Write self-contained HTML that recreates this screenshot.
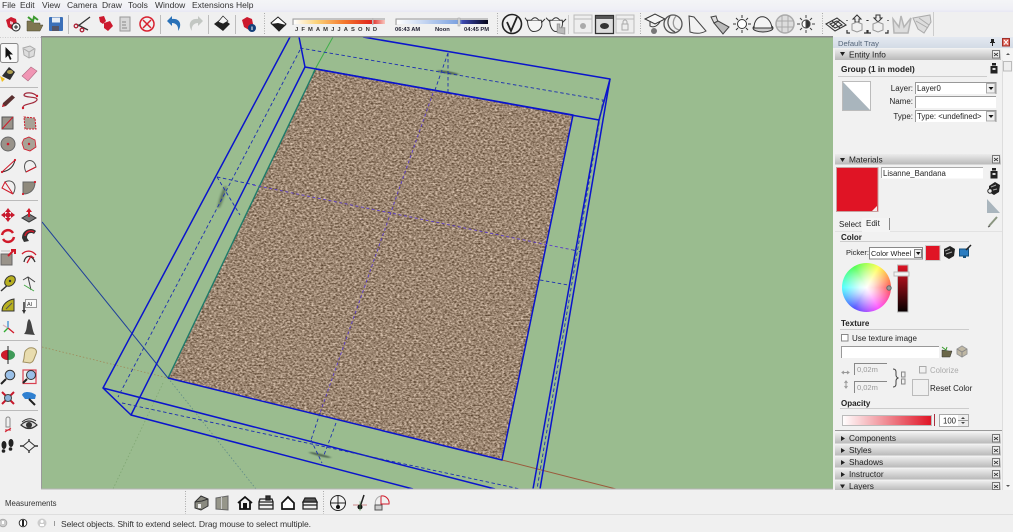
<!DOCTYPE html>
<html><head><meta charset="utf-8"><title>SketchUp</title>
<style>
html,body{margin:0;padding:0;background:#f0f0f0;width:1013px;height:532px;overflow:hidden}
svg{display:block;position:absolute;left:0;top:0;filter:blur(.3px)}
text{font-family:"Liberation Sans",sans-serif;font-size:8px;fill:#222}
.b{font-weight:bold}
.h{font-size:8.5px;fill:#333}
.g{fill:#999}
</style></head><body>
<svg width="1013" height="532" viewBox="0 0 1013 532" xmlns="http://www.w3.org/2000/svg">
<defs>
<filter id="carpet" x="0" y="0" width="100%" height="100%" color-interpolation-filters="sRGB">
<feTurbulence type="fractalNoise" baseFrequency="0.42 0.6" numOctaves="2" seed="7"/>
<feColorMatrix type="matrix" values="0.85 0 0 0 0.185  0.85 0 0 0 0.1  0.85 0 0 0 0.02  0 0 0 0 1"/>
<feGaussianBlur stdDeviation=".35"/>
</filter>
<filter id="sm"><feGaussianBlur stdDeviation="1.2 .5"/></filter>
<clipPath id="cq"><polygon points="316,69 573,115 502,460 168,378"/></clipPath>
<clipPath id="view"><rect x="42" y="37" width="791" height="452"/></clipPath>
<linearGradient id="hd" x1="0" y1="0" x2="0" y2="1"><stop offset="0" stop-color="#ececec"/><stop offset="1" stop-color="#b9b9b9"/></linearGradient>
<linearGradient id="tray" x1="0" y1="0" x2="0" y2="1"><stop offset="0" stop-color="#e4e9f1"/><stop offset="1" stop-color="#d3dbe6"/></linearGradient>
<linearGradient id="menu" x1="0" y1="0" x2="0" y2="1"><stop offset="0" stop-color="#f4f5f7"/><stop offset=".75" stop-color="#f0f0f6"/><stop offset="1" stop-color="#e7e7f4"/></linearGradient>
<linearGradient id="mon" x1="0" y1="0" x2="1" y2="0"><stop offset="0" stop-color="#fff"/><stop offset=".25" stop-color="#fbd37a"/><stop offset=".55" stop-color="#f4782c"/><stop offset=".85" stop-color="#e0241c"/><stop offset="1" stop-color="#f8c8c0"/></linearGradient>
<linearGradient id="tim" x1="0" y1="0" x2="1" y2="0"><stop offset="0" stop-color="#fff"/><stop offset=".68" stop-color="#7aa0e0"/><stop offset=".72" stop-color="#3c48b0"/><stop offset="1" stop-color="#05051a"/></linearGradient>
<linearGradient id="op" x1="0" y1="0" x2="1" y2="0"><stop offset="0" stop-color="#fff"/><stop offset="1" stop-color="#e01425"/></linearGradient>
<linearGradient id="rb" x1="0" y1="0" x2="0" y2="1"><stop offset="0" stop-color="#e01425"/><stop offset="1" stop-color="#050000"/></linearGradient>
</defs>

<!-- chrome -->
<rect width="1013" height="532" fill="#f0f0f0"/>
<rect width="1013" height="12" fill="url(#menu)"/>
<text x="2" y="8" class="h">File</text><text x="20" y="8" class="h">Edit</text><text x="42" y="8" class="h">View</text><text x="67" y="8" class="h">Camera</text><text x="102" y="8" class="h">Draw</text><text x="128" y="8" class="h">Tools</text><text x="155" y="8" class="h">Window</text><text x="192" y="8" class="h">Extensions</text><text x="236" y="8" class="h">Help</text>

<!-- viewport -->
<rect x="42" y="37" width="791" height="452" fill="#9abc8f"/>
<g clip-path="url(#view)">
<g clip-path="url(#cq)"><rect x="160" y="60" width="420" height="410" filter="url(#carpet)"/></g>
<!-- axes -->
<path d="M333,37 L313,73" stroke="#3fae4a" stroke-width="1" fill="none"/>
<path d="M315,70 L168,378" stroke="#1e7a6a" stroke-width="1.4" fill="none"/>
<path d="M502,460 L616,489" stroke="#9a5a3c" stroke-width="1" fill="none"/>
<path d="M42,347 L168,378" stroke="#a08a5a" stroke-width=".8" stroke-dasharray="1.500 2" fill="none"/>
<path d="M163,383 L113,489" stroke="#7fa672" stroke-width=".8" stroke-dasharray="1.500 2" fill="none"/>
<path d="M168,378 L256,489" stroke="#5f8a88" stroke-width=".8" stroke-dasharray="1.500 2" fill="none"/>
<path d="M42,222 L168,378" stroke="#1f3f9a" stroke-width="1" fill="none"/>
<!-- smudges -->
<g filter="url(#sm)" fill="#45584a" opacity=".85"><ellipse cx="448" cy="72.500" rx="11" ry="1.300" transform="rotate(10 448 72.500)"/><ellipse cx="222" cy="197" rx="1.500" ry="12" transform="rotate(18 222 197)"/><ellipse cx="320" cy="455" rx="11" ry="1.200" transform="rotate(14 320 455)"/></g>
<!-- solid lines -->
<g stroke="#0a14cc" stroke-width="1.500" fill="none" stroke-linejoin="round">
<path d="M363,37 L610,79 L599,120 L305,67 L299,37"/>
<path d="M290,37 L103,388 L131,415 L305,67"/>
<path d="M103,388 L495,489"/><path d="M131,415 L413,489"/>
<path d="M610,79 L540,489"/><path d="M599,120 L533,489"/>
<path d="M316,69 L573,115 L502,460 L168,378"/>
</g>
<!-- dashed lines -->
<g stroke="#1c2fb0" stroke-width=".9" stroke-dasharray="3.500 2.500" fill="none">
<path d="M300,48 L603,100 L537,489"/><path d="M300,50 L118,397"/>
<path d="M122,403 L520,489"/>
<path d="M448,53 L435,90"/><path d="M448,53 L448,92"/>
<path d="M336,423 L324,455"/><path d="M311,440 L322,463"/><path d="M320,413 L311,440"/>
<path d="M217,177 L240,215"/><path d="M217,177 L255,185"/>
<path d="M540,280 L568,285"/><path d="M573,250 L580,251.500"/>
</g>
<g stroke="#5a3cc8" stroke-width=".9" stroke-dasharray="3 2.500" fill="none">
<path d="M433,93 L320,413"/><path d="M253,185 L573,250"/>
</g>
</g>
<rect x="41" y="37" width="1" height="452" fill="#9a9a9a"/>
<rect x="41" y="36" width="792" height="1.500" fill="#8a8a8a"/>
<rect x="41" y="488.500" width="792" height="1" fill="#b5b5b5"/>

<!-- TOP TOOLBAR -->
<g stroke="#bdbdbd" fill="none"><path d="M68.500,15V34M160.500,15V34M208.500,15V34M235.500,15V34"/></g>
<g stroke="#aaa" stroke-dasharray="1 1.500" fill="none"><path d="M264.500,13V35M497.500,13V35M640.500,13V35M822.500,13V35"/></g>
<path d="M568.500,15V34M933.500,12V36" stroke="#ccc" fill="none"/>
<!-- new -->
<g transform="translate(13,24)"><path d="M-7,-4 L-2,-7 L3,-5 L4,0 L0,6 L-5,3Z" fill="#cc1a2e"/><path d="M-3,-3l3,1v3l-3,-1z" fill="#f3c0c8"/><circle cx="3" cy="3" r="4" fill="#eee" stroke="#222"/><path d="M1,3h4M3,1v4" stroke="#222"/></g>
<!-- open -->
<g transform="translate(35,24)"><path d="M-8,7 V-3 H-3 L-1,-1 H5 V1 H8 L5,7Z" fill="#7e7650" stroke="#4a452e" stroke-width=".5"/><path d="M-7,-7 L-2,-3 L-1,-7 L3,-4" stroke="#3c9a2e" stroke-width="2" fill="none"/></g>
<!-- save -->
<g transform="translate(56,24)"><rect x="-7" y="-7" width="14" height="14" fill="#3c70b8" rx="1"/><rect x="-4" y="-6.500" width="8" height="5" fill="#e8eef5"/><rect x="-4" y="2" width="7" height="5" fill="#556"/></g>
<!-- cut -->
<g transform="translate(83,24)" stroke="#333" stroke-width="1.300" fill="none"><path d="M-5,2 L7,-7M-7,0 L5,6" /><circle cx="-7" cy="2" r="1.800" stroke="#b0263a"/><circle cx="-1" cy="6" r="1.800" stroke="#b0263a"/></g>
<!-- copy -->
<g transform="translate(106,24)" fill="#cc1a2e"><path d="M-7,-7 L-2,-8 L0,-3 L-3,0 L-6,-2Z"/><path d="M-2,-1 L4,-3 L7,2 L2,7 L-2,4Z"/></g>
<!-- paste -->
<g transform="translate(125,24)"><rect x="-5" y="-7" width="10" height="14" fill="#d8d8d8" stroke="#999"/><path d="M-3,-2h4M-3,1h4M-3,4h5" stroke="#888"/></g>
<!-- erase -->
<g transform="translate(147,24)" fill="none" stroke="#d8202e" stroke-width="1.500"><circle r="7"/><path d="M-4,-4L4,4M4,-4L-4,4"/></g>
<!-- undo redo -->
<g transform="translate(174,24)"><path d="M-7,-3 L-2,-8 V-5 C5,-6 9,0 4,7 C5,1 1,-1 -2,-1 V2Z" fill="#2a72b8"/></g>
<g transform="translate(196,24) scale(-1,1)"><path d="M-7,-3 L-2,-8 V-5 C5,-6 9,0 4,7 C5,1 1,-1 -2,-1 V2Z" fill="#c3c7c3"/></g>
<!-- print -->
<g transform="translate(222,24)"><path d="M-8,0 L0,-6 L8,0 L1,7 Z" fill="#222"/><path d="M-4,-2 L1,-8 L6,-3 L1,0Z" fill="#f5f5f5" stroke="#222" stroke-width=".7"/></g>
<!-- model info -->
<g transform="translate(249,24)"><path d="M-7,-4 L-2,-7 L3,-5 L4,0 L0,6 L-5,3Z" fill="#cc1a2e"/><circle cx="3" cy="4" r="4" fill="#14407a"/><rect x="2.500" y="2.500" width="1" height="3.500" fill="#fff"/></g>
<!-- shadow -->
<g transform="translate(279,24)"><path d="M-8,-1 L-1,-7 L7,0 L0,7Z" fill="#fff" stroke="#222"/><path d="M-8,0 L-1,-1 L7,1 L0,7Z" fill="#222"/></g>
<!-- month -->
<path d="M293,25V19H385" stroke="#999" fill="none"/><rect x="294" y="20" width="91" height="4" fill="url(#mon)"/><rect x="372" y="18" width="1.500" height="7" fill="#bbb"/>
<text x="295" y="31" style="font-size:5.800px;font-weight:bold;letter-spacing:3.100px;fill:#333">JFMAMJJASOND</text>
<!-- time -->
<path d="M396,25V19H488" stroke="#999" fill="none"/><rect x="397" y="20" width="91" height="4" fill="url(#tim)"/><rect x="458" y="18" width="2" height="8" fill="#ddd" stroke="#999" stroke-width=".5"/>
<text x="395" y="31" style="font-size:5.800px;font-weight:bold;fill:#223">06:43 AM</text><text x="435" y="31" style="font-size:5.800px;font-weight:bold;fill:#223">Noon</text><text x="464" y="31" style="font-size:5.800px;font-weight:bold;fill:#223">04:45 PM</text>
<!-- V logo -->
<g transform="translate(512,24)" fill="none" stroke="#222"><circle r="9.500" stroke-width="1.600"/><path d="M-5,-2 L-1,7 L5,-7" stroke-width="1.800"/></g>
<!-- teapots -->
<g transform="translate(535,24) scale(1.25)" fill="#f5f5f5" stroke="#333" stroke-width=".8"><path d="M-6,-3 H5 C7,3 3,6 -1,6 C-4,6 -6,2 -6,-3Z"/><path d="M-6,-2 L-8,-5 M5,-1 L8,-4" fill="none"/><path d="M-3,-3 Q0,-7 3,-3"/></g>
<g transform="translate(556,24) scale(1.25)" fill="#f5f5f5" stroke="#333" stroke-width=".8"><path d="M-5,-3 H5 C6,3 3,6 0,6 C-3,6 -5,2 -5,-3Z"/><path d="M-5,-2 L-8,-5 M5,-1 L8,-4" fill="none"/><path d="M-3,-3 Q0,-7 3,-3"/><path d="M1,7 V0 l2,0 V3 l4,0 V8 Z" fill="#bbb" stroke="#999"/></g>
<!-- windows -->
<g fill="#eee" stroke="#bbb"><rect x="574" y="15" width="18" height="18"/><rect x="616" y="15" width="18" height="18"/></g>
<path d="M574,19h18M616,19h18" stroke="#bbb"/><circle cx="583" cy="26" r="3" fill="#aaa"/><rect x="622" y="24" width="6" height="6" fill="none" stroke="#aaa"/><path d="M623,24v-2a2,2 0 0 1 4,0v2" fill="none" stroke="#aaa"/>
<rect x="595.500" y="15.500" width="18" height="18" fill="#ddd" stroke="#333" stroke-width="1.300"/><rect x="596" y="16" width="17" height="3" fill="#555"/><path d="M600,26 a4.500,3 0 0 1 9,0 a4.500,3 0 0 1 -9,0" fill="#333"/>
<!-- cap -->
<g transform="translate(655,22)"><path d="M-10,-3 L0,-8 L10,-3 L0,2Z" fill="#f5f5f5" stroke="#333"/><path d="M-5,0 V4 Q0,7 5,0" fill="none" stroke="#333"/><circle cy="9" cx="-1" r="3" fill="#777"/></g>
<!-- partial sphere -->
<g transform="translate(673,24)" fill="none" stroke="#555" stroke-width="1.300"><circle r="9"/><path d="M-3,-8 C-7,-2 -5,5 2,8"/><path d="M3,-8 C-1,-3 -1,4 6,6" stroke="#999"/></g>
<!-- cone -->
<g transform="translate(697,25)" fill="#f2f2f2" stroke="#444"><path d="M-8,-9 L-3,-8 L9,6 Q2,10 -7,7Z"/></g>
<!-- flashlight -->
<g transform="translate(720,25)" stroke="#444" fill="#eee"><path d="M-9,-8 L-4,-9 L-2,-3 L-6,-2Z" fill="#ddd"/><path d="M-6,-2 L-2,-4 L9,2 L3,9Z" fill="#bbb"/></g>
<!-- sun -->
<g transform="translate(742,24)" stroke="#333" fill="#fff"><circle r="4.500"/><path d="M0,-9V-6M0,9V6M-9,0H-6M9,0H6M-6,-6L-4,-4M6,6L4,4M6,-6L4,-4M-6,6L-4,4"/></g>
<!-- dome -->
<g transform="translate(763,24)" stroke="#333" fill="#f4f4f4"><ellipse cy="4" rx="10" ry="4" fill="#ccc"/><path d="M-9,4 C-9,-11 7,-11 9,4 Z"/></g>
<!-- grid sphere -->
<g transform="translate(785,24)" stroke="#aaa" fill="#ddd"><circle r="9" stroke-width="1.500"/><path d="M-8,-3H8M-8,3H8M-3,-8V8M3,-8V8" fill="none"/></g>
<!-- sun2 -->
<g transform="translate(806,24)" stroke="#444" fill="#fff"><circle r="4"/><path d="M0,-4a4,4 0 0 1 0,8z" fill="#333"/><path d="M0,-9V-6M0,9V6M-9,0H-6M9,0H6M-6,-6L-4,-4M6,6L4,4M6,-6L4,-4M-6,6L-4,4"/></g>
<!-- diamond -->
<g transform="translate(836,24)" stroke="#333" fill="none" stroke-width="1.100"><path d="M-10,0 L1,-6 L10,1 L-1,7Z"/><path d="M-6,0 L1,-3 L6,1 L-1,4Z"/><path d="M-4,-3L4,4M4,-4L-4,3"/></g>
<!-- box up -->
<g transform="translate(857,24)"><path d="M-2,-2V-5H-4L0,-9L4,-5H2V-2Z" fill="#eee" stroke="#333"/><path d="M-5,0 L0,-2 L5,0 V6 L0,8 L-5,6Z" fill="#f0f0f0" stroke="#999"/><path d="M-10,-3V-4M10,-3V-4M-10,6V9H-7M10,6V9H7" stroke="#333" stroke-width="1.200" fill="none"/></g>
<g transform="translate(878,24)"><path d="M-2,-2V-5H-4L0,-9L4,-5H2V-2Z" fill="#eee" stroke="#333" transform="rotate(180 0 -5.500)"/><path d="M-5,0 L0,-2 L5,0 V6 L0,8 L-5,6Z" fill="#f0f0f0" stroke="#999"/><path d="M-10,-3V-4M10,-3V-4M-10,6V9H-7M10,6V9H7" stroke="#333" stroke-width="1.200" fill="none"/></g>
<!-- grass rock -->
<g transform="translate(902,25)" fill="none" stroke="#b5b5b5" stroke-width="1.500"><path d="M-8,8 L-9,-6 L-3,2 L-1,-9 L2,2 L9,-7 L6,8Z" fill="#ddd"/></g>
<g transform="translate(922,24)" fill="#ddd" stroke="#aaa"><path d="M-9,-6 L8,-9 L9,-2 L2,9 L-4,5Z"/><path d="M-6,-3 L6,4M-3,-6 L7,1" fill="none"/></g>

<!-- LEFT TOOLBAR -->
<rect x=".5" y="43.500" width="17.500" height="19" rx="2" fill="#f8f8f8" stroke="#888"/>
<path d="M38,87.500H0M38,200.500H0M38,340.500H0M38,410.500H0" stroke="#bbb" fill="none"/>
<path d="M0,37.500H41" stroke="#ccc" stroke-dasharray="1 1.500"/>
<!-- row 1 -->
<path d="M5.500,47 V58 L8,55.500 L10,60 L11.500,59 L9.500,54.500 L13,54.500Z" fill="#111"/>
<g transform="translate(29,52)" fill="#ddd" stroke="#aaa"><path d="M-6,-4 L1,-6 L6,-3 L5,4 L0,6 L-5,3Z"/><path d="M-5,-3L0,0L5,-3M0,0V6" fill="none"/></g>
<!-- paint, eraser -->
<g transform="translate(8,74)"><path d="M-6,2 L1,-7 L7,-2 L2,6Z" fill="#2f2f2f"/><path d="M-8,2 L-3,5 L-6,8Z" fill="#f0c020"/><ellipse cx="2" cy="-2" rx="3" ry="2" fill="#b0a050"/></g>
<g transform="translate(29,74)"><path d="M-7,2 L2,-7 L8,-3 L-1,7Z" fill="#f096b4" stroke="#b06a80" stroke-width=".6"/></g>
<!-- pencil, freehand -->
<path d="M2,107 L3,103 L12,95 L15,97.500 L6,106Z" fill="#5a3030"/><path d="M2,107 L3,104 L5,106Z" fill="#d01a2a"/>
<path d="M23,109 C21,103 34,105 37,100 C38,96 24,98 24,95 C25,92 33,92 37,96" fill="none" stroke="#a02a3c" stroke-width="1.200"/><circle cx="23" cy="108" r="1.200" fill="#d01a2a"/><circle cx="37" cy="96" r="1.200" fill="#d01a2a"/>
<!-- rectangles -->
<rect x="2" y="117" width="11" height="12" fill="#99938a" stroke="#555"/><path d="M2,129 L13,117" stroke="#d01a2a"/>
<path d="M24,117 L35,118 L36,129 L25,129Z" fill="#a8a296" stroke="#d01a2a" stroke-dasharray="2 1"/>
<!-- circles -->
<circle cx="8" cy="144" r="7" fill="#99938a" stroke="#666"/><circle cx="8" cy="144" r="1.300" fill="#d01a2a"/>
<path d="M29,137 L35,140 L36,147 L30,151 L24,149 L22,143 L24,139Z" fill="#a8a296" stroke="#d01a2a" stroke-width=".8"/><circle cx="29" cy="144" r="1.200" fill="#d01a2a"/>
<!-- arcs -->
<path d="M2,172 Q13,170 15,160" fill="none" stroke="#333"/><path d="M2,172 L15,160" stroke="#d01a2a" fill="none"/><circle cx="2" cy="172" r="1.100" fill="#d01a2a"/><circle cx="15" cy="160" r="1.100" fill="#d01a2a"/>
<path d="M26,172 C20,160 34,156 36,167Z" fill="none" stroke="#555"/><path d="M26,172 L36,167" stroke="#d01a2a"/>
<path d="M5,182 C13,178 18,186 13,194" fill="none" stroke="#555"/><path d="M2,188 L5,182 L13,194Z" fill="none" stroke="#d01a2a"/>
<path d="M23,182 H35 C35,190 30,194 23,194Z" fill="#8f8a7d" stroke="#666"/><circle cx="23" cy="194" r="1.100" fill="#d01a2a"/><circle cx="35" cy="182" r="1.100" fill="#d01a2a"/>
<!-- move, pushpull -->
<g transform="translate(8,215)" fill="#c8182c"><path d="M0,-7 L3,-3 H-3ZM0,7 L3,3 H-3ZM-7,0 L-3,-3 V3ZM7,0 L3,-3 V3Z"/><rect x="-2.500" y="-2.500" width="5" height="5" transform="rotate(45)"/></g>
<g transform="translate(29,216)"><path d="M-7,2 L0,-2 L7,2 L0,6Z" fill="#777" stroke="#333"/><path d="M0,-8 L3,-4 H1 V1 H-1 V-4 H-3Z" fill="#d01a2a"/></g>
<!-- rotate, followme -->
<g transform="translate(8,236)" fill="none" stroke="#d01a2a" stroke-width="2.500"><path d="M-6,-1 A6,6 0 0 1 5,-3"/><path d="M6,1 A6,6 0 0 1 -5,3"/></g>
<g transform="translate(29,235)"><path d="M-7,3 C-7,-6 3,-8 7,-4 L5,-1 C2,-3 -2,-2 -2,3 L0,6 L-5,7Z" fill="#333"/><path d="M-4,1 C-3,-4 2,-5 5,-3" stroke="#d01a2a" stroke-width="1.500" fill="none"/></g>
<!-- scale, offset -->
<rect x="1" y="254" width="11" height="11" fill="#99938a" stroke="#666"/><path d="M1,251H10" stroke="#bbb"/><path d="M8,256 L14,250 M11,250 H15 V254" stroke="#d01a2a" stroke-width="2" fill="none"/>
<g transform="translate(29,256)" fill="none" stroke="#d01a2a" stroke-width="1.300"><path d="M-7,-2 C-3,-6 3,-6 7,-1"/><path d="M-5,6 C-4,0 2,-3 6,6" stroke="#333"/><path d="M-2,7 L2,0 L5,2" stroke="#d01a2a"/></g>
<!-- tape, dim -->
<g transform="translate(8,284)"><path d="M-7,7 L2,-1" stroke="#333" stroke-width="1.500"/><ellipse cx="2" cy="-3" rx="6" ry="4.500" transform="rotate(-45 2 -3)" fill="#b8b020" stroke="#333"/><circle cx="2" cy="-3" r="1.200" fill="#333"/></g>
<g transform="translate(29,284)" fill="none" stroke="#444"><path d="M-6,-4 L-1,-7 L6,-2 M-1,-7 L2,6"/><path d="M-5,1 L5,7" stroke="#4a4"/></g>
<!-- protractor, text -->
<path d="M2,311 C2,304 8,300 14,299 L14,311Z" fill="#b8b020" stroke="#333"/><path d="M6,309 L12,303" stroke="#555"/>
<path d="M24,312V302" stroke="#333" stroke-width="1.500"/><rect x="25.500" y="299.500" width="11" height="8" fill="#fafafa" stroke="#999"/><text x="27" y="306" style="font-size:5.500px;fill:#333">AI</text><path d="M22,310 L26,310 L24,314Z" fill="#333"/>
<!-- axes, section -->
<g transform="translate(8,328)" fill="none" stroke-width="1.300"><path d="M0,0 L0,-7" stroke="#3a8ad0"/><path d="M0,0 L6,5" stroke="#d01a2a"/><path d="M0,0 L-5,-3" stroke="#d8b0b8"/><path d="M0,0 L-4,4" stroke="#3a3"/></g>
<path d="M24,334 C28,330 26,322 29,319 C32,321 32,331 35,335 Z" fill="#444"/>
<!-- orbit, pan -->
<g transform="translate(8,355)"><ellipse rx="7" ry="5" fill="#3f9a58"/><path d="M-7,0 A7,5 0 0 1 0,-5 V5 A7,5 0 0 1 -7,0" fill="#d01a2a"/><path d="M0,-9V9" stroke="#222"/></g>
<path d="M23,362 C26,354 22,352 29,348 C33,347 38,349 36,354 C34,358 34,362 30,363Z" fill="#e8dcae" stroke="#a09060"/>
<!-- zoom -->
<g transform="translate(8,377)"><circle cx="2" cy="-2" r="4.800" fill="#9ac0e8" stroke="#333"/><path d="M-2,2 L-7,7" stroke="#222" stroke-width="2"/></g>
<rect x="23" y="370" width="13" height="13.500" fill="#f0f0f0" stroke="#d84050" stroke-width="1.200"/><g transform="translate(29,377)"><circle cx="2" cy="-2" r="4.500" fill="#9ac0e8" stroke="#333"/><path d="M-2,2 L-6,6" stroke="#222" stroke-width="2"/></g>
<!-- extents, prev -->
<g transform="translate(8,398)"><path d="M-6,-6L6,6M6,-6L-6,6" stroke="#c8182c" stroke-width="2"/><circle r="3.500" fill="#8ab0d8" stroke="#444"/></g>
<g transform="translate(29,398)"><path d="M-7,-3 C-6,-7 2,-7 7,-3 L6,1 L-4,1Z" fill="#3080d0"/><path d="M0,1 L6,7" stroke="#222" stroke-width="2"/></g>
<!-- position camera, look -->
<g transform="translate(8,425)" fill="none"><path d="M-2,-6 a2,2 0 1 1 4,0 L2,2 H-2Z" stroke="#888"/><path d="M-3,5 L3,5 M-3,7 L3,3" stroke="#d01a2a"/></g>
<g transform="translate(29,425)"><path d="M-8,0 Q0,-8 8,0 Q0,7 -8,0Z" fill="#ddd" stroke="#333" stroke-width="1.200"/><circle r="3" fill="#333"/><path d="M-7,-3 Q0,-9 7,-4" stroke="#333" fill="none"/></g>
<!-- walk, zoom tool -->
<g fill="#222"><ellipse cx="4" cy="445" rx="2.500" ry="4"/><ellipse cx="3.500" cy="451" rx="1.800" ry="1.800"/><ellipse cx="11" cy="443" rx="2.500" ry="4"/><ellipse cx="10.500" cy="449" rx="1.800" ry="1.800"/></g>
<g transform="translate(29,446)" fill="none" stroke="#333"><path d="M0,-5 L6,0 L0,5 L-6,0Z"/><path d="M-6,0H-9M6,0H9M0,-5V-7M0,5V7" stroke-width="1.400"/></g>

<!-- BOTTOM -->
<text x="5" y="506" style="font-size:7.800px;fill:#333">Measurements</text>
<path d="M185.500,491V514M323.500,491V514" stroke="#aaa" stroke-dasharray="1 1.500"/>
<path d="M0,514.500H1013" stroke="#dedede"/>
<g transform="translate(201,503)"><path d="M-6,-1 L0,-7 L7,-4 L7,3 L0,7 L-6,5Z" fill="#8a8a80" stroke="#333"/><path d="M-6,-1 L1,-2 L7,-4" stroke="#333" fill="none"/><rect x="-3" y="1" width="3" height="4" fill="#eee"/></g>
<g transform="translate(222,503)"><path d="M-6,-5 L6,-7 V7 L-6,6Z" fill="#96968a" stroke="#666"/><rect x="-1" y="-6" width="1" height="12" fill="#ccc"/></g>
<g transform="translate(245,503)"><path d="M-7,0 L0,-6 L7,0 M-5,-1 V6 H5 V-1" fill="none" stroke="#111" stroke-width="1.800"/><rect x="-2" y="0" width="4" height="6" fill="#111"/></g>
<g transform="translate(266,503)" fill="none" stroke="#222" stroke-width="1.300"><path d="M-7,-1 V6 H7 V-1Z M-7,-1 L-6,-4 H6 L7,-1"/><rect x="0" y="-7" width="4" height="4" fill="#333"/><path d="M-7,2H7"/></g>
<g transform="translate(288,503)"><path d="M-6,0 L0,-6 L6,0 V6 H-6Z" fill="#fff" stroke="#111" stroke-width="1.700"/></g>
<g transform="translate(310,503)" fill="none" stroke="#222" stroke-width="1.300"><path d="M-7,-1 V6 H7 V-1Z"/><path d="M-7,-1 L-5,-5 H5 L7,-1Z" fill="#555"/><path d="M-7,2H7"/></g>
<g transform="translate(338,503)"><circle r="7.500" fill="#f4f4f4" stroke="#222"/><path d="M-7,0H7M0,-7V3" stroke="#222"/><circle cy="4" r="2" fill="#111"/></g>
<g transform="translate(360,503)"><path d="M-7,2H7" stroke="#c88"/><path d="M0,4 L4,-8" stroke="#222" stroke-width="1.500"/><circle cy="4" r="2.500" fill="#111"/><path d="M0,-2V8" stroke="#6a6" stroke-width=".6"/></g>
<g transform="translate(382,503)" fill="none"><path d="M-1,-7 A7,7 0 0 1 7,1 H-1Z" stroke="#d01a2a"/><path d="M-1,-7 A7,7 0 0 0 -6,3" stroke="#aaa"/><rect x="-7" y="2" width="7" height="5" fill="#ccc" stroke="#555"/></g>

<!-- status -->
<g transform="translate(3,523)"><circle r="3.800" fill="#ccc" stroke="#aaa"/><rect x="-1" y="-2" width="2" height="3" fill="#fff"/></g>
<g transform="translate(23,523)"><circle r="3.800" fill="#fff" stroke="#333"/><rect x="-1" y="-3" width="2" height="6" fill="#222"/></g>
<g transform="translate(42,523)"><circle r="4.500" fill="#ccc"/><circle cy="-1.500" r="1.500" fill="#fff"/><rect x="-2" y="1" width="4" height="2" fill="#fff"/></g>
<path d="M54.500,521V526" stroke="#999"/>
<text x="61" y="527" style="font-size:8.600px;fill:#333" textLength="250" lengthAdjust="spacing">Select objects. Shift to extend select. Drag mouse to select multiple.</text>

<!-- RIGHT PANEL -->
<rect x="833" y="37" width="180" height="453" fill="#f1f1f1"/>
<rect x="833" y="37" width="180" height="11" fill="url(#tray)"/>
<text x="838" y="46" style="font-size:7.600px;fill:#56667a">Default Tray</text>
<path d="M991,39h3v3h1v1h-2v3h-1v-3h-2v-1h1z" fill="#222"/>
<rect x="1002.500" y="38.500" width="7" height="7.500" fill="#e06a60" stroke="#a03028"/><path d="M1004,40l4,4.500m0,-4.500l-4,4.500" stroke="#fff" fill="none"/>
<!-- headers -->
<g fill="url(#hd)"><rect x="835" y="49" width="166" height="11"/><rect x="835" y="154" width="166" height="10.500"/><rect x="835" y="433" width="166" height="10.500"/><rect x="835" y="445" width="166" height="10.500"/><rect x="835" y="457" width="166" height="10.500"/><rect x="835" y="469" width="166" height="10.500"/><rect x="835" y="481" width="166" height="9.500"/></g>
<g fill="#222"><path d="M840,52h5l-2.500,4zM840,158h5l-2.500,4zM840,484.500h5l-2.500,4z"/><path d="M841,436l4,2.500l-4,2.500zM841,448l4,2.500l-4,2.500zM841,460l4,2.500l-4,2.500zM841,472l4,2.500l-4,2.500z"/></g>
<g style="fill:#333"><text x="849" y="57.500" style="font-size:8.300px">Entity Info</text><text x="849" y="162.500" style="font-size:8.300px">Materials</text><text x="849" y="441" style="font-size:8.300px">Components</text><text x="849" y="453" style="font-size:8.300px">Styles</text><text x="849" y="465" style="font-size:8.300px">Shadows</text><text x="849" y="477" style="font-size:8.300px">Instructor</text><text x="849" y="489" style="font-size:8.300px">Layers</text></g>
<g fill="#eee" stroke="#777"><rect x="992.500" y="50.500" width="7" height="7.500"/><rect x="992.500" y="155.500" width="7" height="7.500"/><rect x="992.500" y="434.500" width="7" height="7.500"/><rect x="992.500" y="446.500" width="7" height="7.500"/><rect x="992.500" y="458.500" width="7" height="7.500"/><rect x="992.500" y="470.500" width="7" height="7.500"/><rect x="992.500" y="482.500" width="7" height="7"/></g>
<path d="M994,53l4,3m0,-3l-4,3M994,158l4,3m0,-3l-4,3M994,437l4,3m0,-3l-4,3M994,449l4,3m0,-3l-4,3M994,461l4,3m0,-3l-4,3M994,473l4,3m0,-3l-4,3M994,485l4,3m0,-3l-4,3" stroke="#333" stroke-width=".8" fill="none"/>
<!-- scrollbar -->
<rect x="1003" y="49" width="10" height="441" fill="#f4f4f4"/>
<rect x="1003.500" y="61.500" width="8" height="9.500" fill="#eee" stroke="#bbb"/>
<path d="M1006,55h4l-2,-2zM1006,485h4l-2,2z" fill="#555"/>
<path d="M1002.500,60V490" stroke="#ddd" fill="none"/>
<!-- entity info -->
<text x="841" y="72" class="b" style="font-size:8.300px">Group (1 in model)</text>
<g fill="#222"><rect x="992" y="63" width="4" height="2.500"/><rect x="990.500" y="66" width="7" height="7.500"/></g><rect x="992.500" y="68" width="3" height="2" fill="#ddd"/>
<path d="M838,76.500H987" stroke="#ccc"/>
<rect x="842.500" y="81.500" width="28" height="29" fill="#fff" stroke="#bbb"/><path d="M843,82V110H870Z" fill="#a9b5bd"/>
<text x="913" y="91" text-anchor="end" style="font-size:8px">Layer:</text><text x="913" y="104" text-anchor="end" style="font-size:8px">Name:</text><text x="913" y="119" text-anchor="end" style="font-size:8px">Type:</text>
<g fill="#fff"><rect x="915" y="82" width="81" height="12"/><rect x="915" y="96" width="81" height="12"/><rect x="915" y="110" width="81" height="12"/></g>
<path d="M915.500,94V82.500H996V94M915.500,122V110.500H996V122M915.500,108V96.500H996" stroke="#999" fill="none"/>
<text x="917" y="91" style="font-size:7.800px">Layer0</text><text x="917" y="119" style="font-size:7.800px">Type:  &lt;undefined&gt;</text>
<g fill="#f0f0f0" stroke="#aaa"><rect x="986.500" y="83.500" width="8.500" height="9.500"/><rect x="986.500" y="111.500" width="8.500" height="9.500"/></g>
<path d="M988.500,87h5l-2.500,3zM988.500,115h5l-2.500,3z" fill="#111"/>
<!-- materials -->
<rect x="836.500" y="167.500" width="41.500" height="44" fill="#e01425" stroke="#c8a0a0"/><path d="M877,206V211H872Z" fill="#f4e8e8"/>
<rect x="881" y="167" width="102" height="11.500" fill="#fff"/><path d="M881.500,178V167.500H983" stroke="#aaa" fill="none"/>
<text x="883" y="176" style="font-size:7.800px">Lisanne_Bandana</text>
<g fill="#222"><rect x="992" y="168" width="4" height="2.500"/><rect x="990.500" y="171" width="7" height="7.500"/></g><rect x="992.500" y="173" width="3" height="2" fill="#ddd"/>
<g transform="translate(994,188)"><path d="M-5,-2 L1,-6 L6,-3 L5,4 L0,7 L-5,4Z" fill="#222"/><path d="M-3,-1 L2,-3M-1,2L3,1" stroke="#aaa" fill="none"/><circle cx="-4" cy="3" r="2.200" fill="#eee" stroke="#222"/></g>
<path d="M987,199V213H1000Z" fill="#a9b5bd"/>
<!-- tabs -->
<rect x="862" y="218" width="28" height="14" fill="#f4f4f4"/>
<text x="839" y="227" style="font-size:8px">Select</text><text x="866" y="226" style="font-size:8px">Edit</text>
<path d="M889.500,218V230" stroke="#888"/><path d="M835,231.500H862M890,231.500H1002" stroke="#e2e2e2"/>
<path d="M989,226 L997,217" stroke="#8a9580" stroke-width="2"/><path d="M988,227 l2,-1" stroke="#555"/>
<!-- color -->
<text x="841" y="240" class="b" style="font-size:8px">Color</text><path d="M840,241.500H969" stroke="#ccc"/>
<text x="846" y="255" style="font-size:7.500px">Picker:</text>
<rect x="869.500" y="247.500" width="53" height="11.500" fill="#fff" stroke="#888"/>
<text x="871" y="256" style="font-size:7.300px">Color Wheel</text>
<rect x="914.500" y="249.500" width="7" height="8" fill="#eee" stroke="#888"/><path d="M916,252h4.500l-2.250,3z" fill="#111"/>
<rect x="925.500" y="245.500" width="14.500" height="15" fill="#e01425" stroke="#ccc"/>
<g transform="translate(949,252)"><path d="M-5,-3 L1,-6 L6,-3 L5,4 L0,7 L-5,4Z" fill="#222"/><path d="M-4,-1 L1,-3M-3,2L3,0" stroke="#aaa" fill="none"/></g>
<g transform="translate(965,252)"><rect x="-5.500" y="-3" width="9" height="7" fill="#2b7cc0" stroke="#14507c"/><rect x="-2" y="4" width="3" height="2" fill="#14507c"/><path d="M1,-2 L6,-7" stroke="#222" stroke-width="1.500"/></g>
<!-- wheel -->
<foreignObject x="842" y="262.500" width="49" height="49"><div xmlns="http://www.w3.org/1999/xhtml" style="width:49px;height:49px;border-radius:50%;background:radial-gradient(circle,#fff 0,rgba(255,255,255,.85) 20%,rgba(255,255,255,0) 100%),conic-gradient(from 90deg,#f00,#f0f 60deg,#00f 120deg,#0ff 180deg,#0f0 240deg,#ff0 300deg,#f00 360deg)"></div></foreignObject>
<circle cx="889" cy="288" r="2.200" fill="#999" stroke="#666"/>
<rect x="897.500" y="265" width="10.500" height="47" fill="url(#rb)" stroke="#bbb"/>
<rect x="894" y="272" width="15" height="4" fill="#f4f4f4" stroke="#bbb"/>
<!-- texture -->
<text x="841" y="326" class="b" style="font-size:8px">Texture</text><path d="M840,329.500H969" stroke="#ccc"/>
<rect x="841.500" y="334.500" width="6.500" height="6.500" fill="#fff" stroke="#888"/>
<text x="852" y="341" style="font-size:8px">Use texture image</text>
<rect x="841" y="346" width="98" height="12" fill="#fff"/><path d="M841.500,358V346.500H939" stroke="#999" fill="none"/>
<g transform="translate(947,352)"><path d="M-5,5 V-2 L2,-1 H5 L3,5Z" fill="#6a6648" stroke="#333" stroke-width=".5"/><path d="M-5,-5 L-1,-2 L0,-5" stroke="#3a9a2e" fill="none"/></g>
<g transform="translate(962,351)"><path d="M-5,-2 L0,-5 L5,-2 V3 L0,6 L-5,3Z" fill="#c0b8a4" stroke="#999"/><path d="M-5,-2 L0,1 L5,-2 M0,1V6" stroke="#888" fill="none"/></g>
<path d="M854.500,375V363.500H887M854.500,393V381.500H887" stroke="#888" fill="none"/>
<text x="857" y="372" class="g" style="font-size:7.500px">0,02m</text><text x="857" y="390" class="g" style="font-size:7.500px">0,02m</text>
<path d="M842,372.500h7M844,371l-2,1.500l2,1.500M847,371l2,1.500l-2,1.500M846,381v7M844.500,383l1.500,-2l1.500,2M844.500,386l1.500,2l1.500,-2" stroke="#999" fill="none"/>
<path d="M893,369 q3,0 3,3 v3 q0,2 2,3 q-2,1 -2,3 v3 q0,3 -3,3" stroke="#444" fill="none"/>
<rect x="901.500" y="372" width="3.500" height="5" fill="none" stroke="#888"/><rect x="901.500" y="379" width="3.500" height="5" fill="none" stroke="#888"/>
<rect x="919.500" y="366.500" width="6.500" height="6.500" fill="none" stroke="#aaa"/>
<text x="930" y="373" style="font-size:7.800px;fill:#aaa">Colorize</text>
<rect x="912.500" y="379.500" width="16" height="16" fill="#f0f0f0" stroke="#bbb"/>
<text x="930" y="391" style="font-size:8px">Reset Color</text>
<!-- opacity -->
<text x="841" y="406" class="b" style="font-size:8px">Opacity</text><path d="M840,408.500H969" stroke="#ccc"/>
<rect x="842.500" y="415.500" width="89" height="10" fill="url(#op)" stroke="#bbb"/>
<rect x="934" y="414" width="1" height="12" fill="#a83040"/>
<rect x="939.500" y="414.500" width="29" height="12" fill="#fff" stroke="#aaa"/>
<text x="943" y="423.500" style="font-size:7.800px">100</text>
<rect x="958" y="415" width="10" height="11" fill="#eee"/><path d="M958,420.500h10" stroke="#999"/><path d="M961,419l2,-2l2,2zM961,422h4l-2,2z" fill="#444"/>
<path d="M835,430.500H1002" stroke="#999"/>
<rect x="833" y="490" width="180" height="24" fill="#f0f0f0"/>
</svg>
</body></html>
